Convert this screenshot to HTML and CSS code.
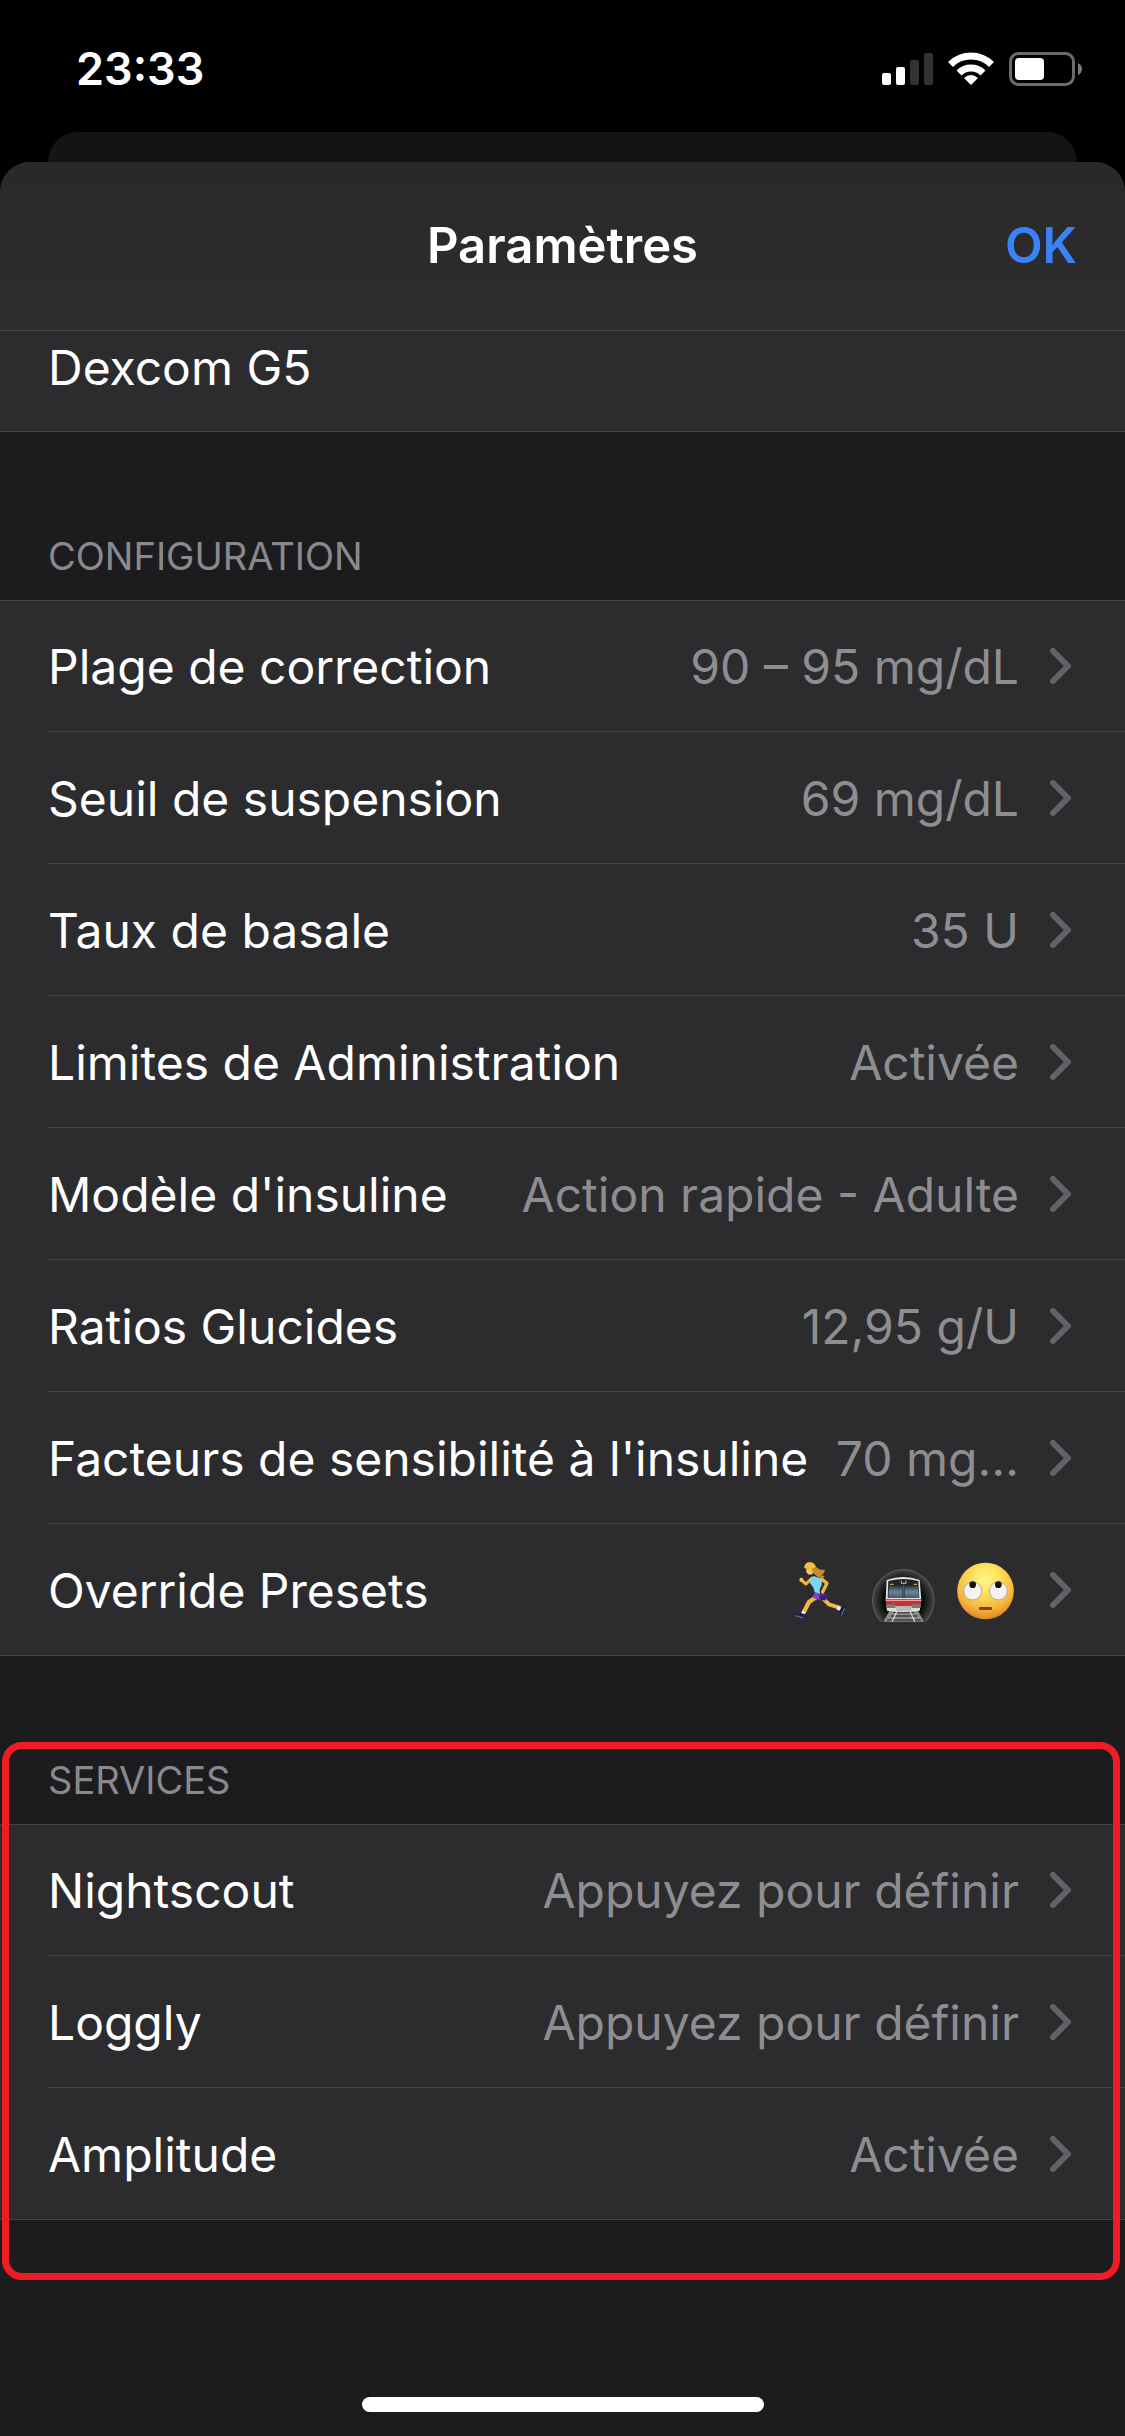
FILE: index.html
```html
<!DOCTYPE html>
<html lang="fr">
<head>
<meta charset="utf-8">
<meta name="viewport" content="width=device-width, initial-scale=1">
<title>Paramètres</title>
<link rel="stylesheet" href="styles.css">
</head>
<body>
<svg class="defs" aria-hidden="true">
  <symbol id="chevron" viewBox="0 0 22 36">
    <path d="M3 3 18 18 3 33" fill="none" stroke="currentColor" stroke-width="6" stroke-linecap="round" stroke-linejoin="round"/>
  </symbol>
</svg>

<header class="status">
  <time class="clock">23:33</time>
  <div class="indicators">
    <svg width="51" height="34" viewBox="0 0 51 34" aria-label="Réseau">
      <g fill="#fff"><rect x="0" y="21" width="9" height="12" rx="2"/><rect x="14" y="15" width="9" height="18" rx="2"/></g>
      <g fill="#333"><rect x="28" y="8" width="9" height="25" rx="2"/><rect x="42" y="1" width="9" height="32" rx="2"/></g>
    </svg>
    <svg width="46" height="34" viewBox="0 0 46 34" aria-label="Wi-Fi">
      <g fill="none" stroke="#fff" stroke-width="7">
        <path d="M2.500 12.500a29 29 0 0 1 41 0"/>
        <path d="M11 21a17 17 0 0 1 24 0"/>
      </g>
      <path d="M23 33 16 26Q23 20 30 26Z" fill="#fff"/>
    </svg>
    <svg width="73" height="34" viewBox="0 0 73 34" aria-label="Batterie">
      <rect x="1.500" y="1.500" width="63" height="31" rx="8" fill="none" stroke="#6b6b6b" stroke-width="3"/>
      <rect x="6" y="6" width="29" height="22" rx="4" fill="#fff"/>
      <path d="M69 11q4 2 4 6t-4 6z" fill="#7b7b7b"/>
    </svg>
  </div>
</header>

<div class="back-card"></div>

<main class="sheet">
  <nav class="navbar">
    <h1>Paramètres</h1>
    <button type="button" class="done">OK</button>
  </nav>

  <ul class="list list-scrolled">
    <li><a class="row" href="#dexcom"><span class="label">Dexcom G5</span></a></li>
  </ul>

  <section>
    <h2>CONFIGURATION</h2>
    <ul class="list">
      <li><a class="row" href="#correction"><span class="label">Plage de correction</span><span class="value">90 – 95 mg/dL</span><svg class="chevron"><use href="#chevron"/></svg></a></li>
      <li><a class="row" href="#suspension"><span class="label">Seuil de suspension</span><span class="value">69 mg/dL</span><svg class="chevron"><use href="#chevron"/></svg></a></li>
      <li><a class="row" href="#basale"><span class="label">Taux de basale</span><span class="value">35 U</span><svg class="chevron"><use href="#chevron"/></svg></a></li>
      <li><a class="row" href="#limites"><span class="label">Limites de Administration</span><span class="value">Activée</span><svg class="chevron"><use href="#chevron"/></svg></a></li>
      <li><a class="row" href="#modele"><span class="label">Modèle d'insuline</span><span class="value">Action rapide - Adulte</span><svg class="chevron"><use href="#chevron"/></svg></a></li>
      <li><a class="row" href="#ratios"><span class="label">Ratios Glucides</span><span class="value">12,95 g/U</span><svg class="chevron"><use href="#chevron"/></svg></a></li>
      <li><a class="row" href="#facteurs"><span class="label">Facteurs de sensibilité à l'insuline</span><span class="value">70 mg…</span><svg class="chevron"><use href="#chevron"/></svg></a></li>
      <li><a class="row" href="#presets"><span class="label">Override Presets</span>
        <span class="presets">
          <svg width="57" height="64" viewBox="66 54 171 192" role="img" aria-label="Course">
            <g fill="none" stroke="#f3b545" stroke-linecap="round" stroke-linejoin="round">
              <path d="M126 114 108 132 95 121" stroke-width="9"/>
              <path d="M155 117 171 130 158 156" stroke-width="10"/>
              <path d="M140 170 117 186 102 215" stroke-width="13"/>
              <path d="M158 174 177 193 208 203" stroke-width="12"/>
            </g>
            <circle cx="94" cy="119" r="6" fill="#fbc64a"/>
            <path d="M110 83h20l-2 20-12 1-8-9z" fill="#fbc64a"/>
            <path d="M103 83Q104 68 119 67 133 67 138 80 147 91 165 89 164 100 153 107 166 105 163 111 149 118 137 106 128 99 125 88Z" fill="#c98b30"/>
            <path d="M103 83q2-16 16-16 12 0 18 13-10 11-34 5z" fill="#f2bd4a"/>
            <path d="M120 117 131 108 146 113 156 117 155 135 149 148 150 162 134 157Q132 142 120 130Z" fill="#7fd5ef"/>
            <path d="M133 157 151 162 170 163 168 181 151 181 129 174Z" fill="#7d45c2"/>
            <path d="M148 164l22-1-2 18-19-1z" fill="#431a7a"/>
            <path d="M97 212l10 5-3 5-11-2zM203 198l9 2-3 12-9-3z" fill="#eef0f6"/>
            <path d="M70 223 92 220 104 223 103 236Q84 236 70 223Z" fill="#18204f"/>
            <path d="M210 211 219 198 226 199Q226 216 216 229L208 228Z" fill="#18204f"/>
            <path d="M76 227l25 7M214 227l10-22" stroke="#aab1ce" stroke-width="2"/>
          </svg>
          <svg width="64" height="64" viewBox="303 54 192 192" role="img" aria-label="Métro">
            <defs>
              <radialGradient id="tunnel"><stop offset=".6" stop-color="#050505"/><stop offset=".93" stop-color="#3c3c3b"/><stop offset="1" stop-color="#60605f"/></radialGradient>
              <linearGradient id="glass" x2="0" y2="1"><stop stop-color="#2e3a43"/><stop offset=".5" stop-color="#68889c"/><stop offset="1" stop-color="#455968"/></linearGradient>
              <clipPath id="floor"><path d="M303 84h192v161H303z"/></clipPath>
            </defs>
            <g clip-path="url(#floor)">
              <circle cx="400" cy="181" r="94" fill="url(#tunnel)"/>
              <path d="M359 211h84l20 36H339z" fill="#8b8c8c"/>
              <path d="M370 217h62M362 228h80M352 240h100" stroke="#3c3c3c" stroke-width="5"/>
              <path d="M381 214l-15 32M420 214l15 32" stroke="#d7d7d7" stroke-width="4"/>
            </g>
            <path d="M350 120Q400 102 449 120L454 180 449 212Q400 220 351 212L347 180Z" fill="#e5e5e2"/>
            <path d="M355 123Q400 111 445 123L448 174H353Z" fill="#20262b"/>
            <path d="M357 138h40v36h-42zM404 138h40l3 36h-43z" fill="url(#glass)"/>
            <path d="M398 136h5v39h-5z" fill="#555d63"/>
            <path d="M394 122v8h14v-8M360 133h11M431 133h11" fill="none" stroke="#dbc43d" stroke-width="3"/>
            <path d="M348 177h105v21H348z" fill="#cc3037"/>
            <path d="M347 181h107" stroke="#f5b9b9" stroke-width="3"/>
            <path d="M349 193h24l5 11h-28zM452 193h-24l-5 11h28z" fill="#777a7b"/>
            <path d="M378 198h46v15h-46z" fill="#b9bbbb"/>
            <path d="M358 208h18M426 208h18" stroke="#ead899" stroke-width="5"/>
          </svg>
          <svg width="62" height="64" viewBox="561 54 186 192" role="img" aria-label="Yeux levés">
            <defs><radialGradient id="skin" cx=".5" cy=".3" r=".7"><stop stop-color="#fff58a"/><stop offset=".35" stop-color="#fee25b"/><stop offset=".75" stop-color="#f5b53c"/><stop offset="1" stop-color="#df8428"/></radialGradient></defs>
            <circle cx="646.500" cy="153" r="85" fill="url(#skin)"/>
            <g fill="#f3f2f1" stroke="#b4aa9c" stroke-width="3"><circle cx="608" cy="153" r="27"/><circle cx="685" cy="153" r="27"/></g>
            <circle cx="608" cy="134" r="10" fill="#16100c"/><circle cx="685" cy="134" r="10" fill="#16100c"/>
            <rect x="627" y="201" width="39" height="9" rx="4" fill="#77430f"/>
          </svg>
        </span><svg class="chevron"><use href="#chevron"/></svg></a></li>
    </ul>
  </section>

  <section class="highlighted">
    <h2>SERVICES</h2>
    <ul class="list">
      <li><a class="row" href="#nightscout"><span class="label">Nightscout</span><span class="value">Appuyez pour définir</span><svg class="chevron"><use href="#chevron"/></svg></a></li>
      <li><a class="row" href="#loggly"><span class="label">Loggly</span><span class="value">Appuyez pour définir</span><svg class="chevron"><use href="#chevron"/></svg></a></li>
      <li><a class="row" href="#amplitude"><span class="label">Amplitude</span><span class="value">Activée</span><svg class="chevron"><use href="#chevron"/></svg></a></li>
    </ul>
  </section>

  <div class="home-indicator"></div>
</main>
</body>
</html>
```
FILE: styles.css
```css
* { box-sizing: border-box; }

body {
  margin: 0;
  min-height: 100vh;
  display: flex;
  flex-direction: column;
  background: #000;
  color: #fff;
  font-family: Inter, "Liberation Sans", sans-serif;
  font-size: 48px;
  line-height: 60px;
}

.defs { position: absolute; width: 0; height: 0; }

/* Status bar */
.status {
  display: flex;
  justify-content: space-between;
  align-items: center;
  min-height: 132px;
  padding: 6px 43px 0 76px;
}
.clock { font-size: 45px; font-weight: 600; }
.indicators { display: flex; align-items: center; gap: 15px; }

/* Card behind the sheet */
.back-card {
  height: 30px;
  margin: 0 48px;
  border-radius: 30px 30px 0 0;
  background: #141414;
}

.sheet {
  flex: 1;
  display: flex;
  flex-direction: column;
  overflow: hidden;
  border-radius: 30px 30px 0 0;
  background: #1c1c1e;
}

.navbar {
  display: grid;
  grid-template-columns: 1fr auto 1fr;
  align-items: center;
  min-height: 169px;
  padding: 0 48px;
  border-bottom: 1px solid #4b4b4d;
  background: linear-gradient(#292929, #2d2d2d);
  font-size: 49px;
  font-weight: 600;
}
.navbar h1 { grid-column: 2; margin: 0; font: inherit; }
.done {
  justify-self: end;
  padding: 0;
  border: 0;
  background: none;
  color: #3a82f7;
  font: inherit;
}

h2 {
  margin: 0;
  padding: 100px 48px 20px;
  color: #8a8a8e;
  font-size: 38px;
  font-weight: 400;
  line-height: 48px;
}

.list {
  margin: 0;
  padding: 0 0 0 48px;
  list-style: none;
  border: solid #444446;
  border-width: 1px 0;
  background: #2c2c2e;
}
.list li + li { border-top: 1px solid #444446; }

.row {
  display: flex;
  align-items: center;
  min-height: 131px;
  padding-right: 53px;
  color: inherit;
  text-decoration: none;
  white-space: nowrap;
}
.list li:first-child .row { min-height: 130px; }

/* First group, partly scrolled under the navigation bar */
.list-scrolled { border-top: 0; }
.list-scrolled li:first-child .row { min-height: 100px; padding-bottom: 28px; }

.label, .value { padding-top: 2px; }
.value { margin-left: auto; color: #8e8e92; }
.presets { display: flex; gap: 22px; margin-left: auto; }
.chevron { flex: none; width: 22px; height: 36px; margin-left: 31px; color: #636367; }

/* Outline drawn over the services group */
.highlighted { position: relative; }
.highlighted::after {
  content: "";
  position: absolute;
  inset: 86px 5px -60px 2px;
  border: 7px solid #ee1c24;
  border-radius: 20px;
  pointer-events: none;
}

.home-indicator {
  width: 402px;
  height: 15px;
  margin: auto auto 24px;
  border-radius: 8px;
  background: #fff;
}
```
